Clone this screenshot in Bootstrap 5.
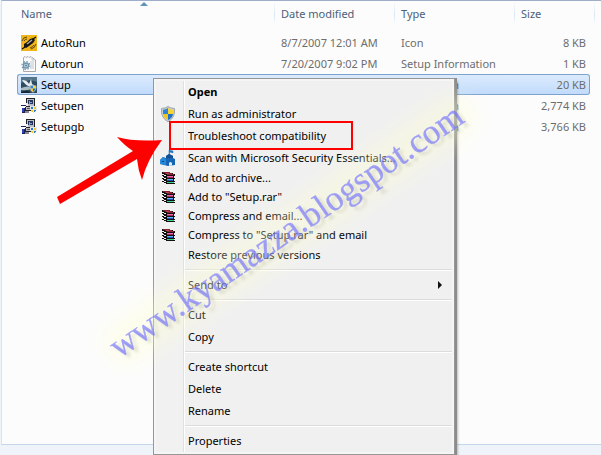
<!DOCTYPE html>
<html lang="en">
<head>
<meta charset="utf-8">
<meta name="viewport" content="width=device-width, initial-scale=1">
<title>Setup files</title>
<link href="https://cdn.jsdelivr.net/npm/bootstrap@5.3.0/dist/css/bootstrap.min.css" rel="stylesheet">
<style>
  body { font: 11px/16px "Noto Sans", "Open Sans", sans-serif; background: #eff3fa; color: #000; }
  .file-pane { background: #fcfcfc; border-top: 1px solid #9fadc8; border-bottom: 1px solid #c5d5ea; border-left: 1px solid #d5e3f1; margin-left: 1px;
    background-image: linear-gradient(#fcfcfc, #d8e7f6 60%, #fcfcfc); background-size: 1px 24px; background-position: right 6px top; background-repeat: no-repeat; }
  .file-table { margin: 0 11px 0 15px; border-collapse: separate; border-spacing: 0; table-layout: fixed; width: calc(100% - 26px); }
  .file-table th { position: relative; height: 31px; padding: 5px 7px 0; vertical-align: top; font-weight: 400; color: #4c607a; }
  .file-table th + th { background: linear-gradient(#fcfcfc, #d8e7f6 60%, #fcfcfc) left top / 1px 24px no-repeat; }
  .file-table th:first-child, .file-table td:first-child { padding-left: 4px; }
  .file-table td { height: 21px; padding: 0 4px 0 7px; color: #6d6d6d; white-space: nowrap; overflow: hidden; border: solid transparent; border-width: 1px 0; }
  .file-table td:first-child { color: #000; padding-left: 3px; border-left-width: 1px; }
  .file-table td:last-child { padding-right: 3px; border-right-width: 1px; }
  .file-table .picked td { border-color: #7da2ce; background: linear-gradient(#dcebfd, #c1dbfc); }
  .file-table .picked td:first-child { border-radius: 3px 0 0 3px; }
  .file-table .picked td:last-child { border-radius: 0 3px 3px 0; }
  .date-col, .type-col { width: 120px; }
  .size-col { width: 76px; }
  .sort-mark { position: absolute; top: 1px; left: 48%; }
  .bottom-strip { height: 10px; }
  .icon16 { width: 16px; height: 16px; flex: none; }
  .shell-menu { position: absolute; left: 153px; top: 78px; width: 302px; padding: 2px; border: 1px solid #979797; box-shadow: 1px 1px 0 1px #8c8c8c, 3px 3px 2px rgba(0,0,0,.25);
    background: linear-gradient(90deg, #f1f1f1 27px, #dfe0e0 27px, #dfe0e0 28px, #fff 28px, #fff 29px, #f0f0f0 29px) 2px 2px / calc(100% - 4px) calc(100% - 4px) no-repeat #f5f5f5; }
  .shell-item { display: flex; align-items: center; width: 100%; height: 22px; border: 0; background: none; padding: 0 10px 0 4px; color: #000; text-align: left; }
  .shell-item .slot { width: 28px; height: 16px; flex: none; display: flex; }
  .shell-item.tight { height: 19px; }
  .shell-item.snug { height: 21px; }
  .shell-line { margin: 3px 0 3px 29px; height: 2px; border: 0; border-top: 1px solid #dcdcdc; background: #fff; opacity: 1; }
  .notes { position: absolute; left: 0; top: 0; pointer-events: none; }
  .stamp { font: 35px "Liberation Serif", serif; }
</style>
<script src="https://cdn.jsdelivr.net/npm/bootstrap@5.3.0/dist/js/bootstrap.bundle.min.js"></script>
</head>
<body>
<svg class="d-none" aria-hidden="true">
  <symbol id="shield" viewBox="0 0 16 16">
    <path d="M8 .5Q10 2.2 14.5 2.5Q15.6 11.5 8 15.8Q.4 11.5 1.5 2.5Q6 2.2 8 .5Z" fill="#c9d0d4" stroke="#8d989f" stroke-width=".8"/>
    <path d="M8 2Q6 3.5 3 3.7V8H8Z" fill="#2d83d7"/><path d="M8 2Q10 3.5 13 3.7V8H8Z" fill="#f7d432"/>
    <path d="M3 8H8V14.3Q3.6 12 3 8Z" fill="#f4c51c"/><path d="M13 8H8V14.3Q12.4 12 13 8Z" fill="#2170c7"/>
  </symbol>
  <symbol id="books" viewBox="0 0 16 16" shape-rendering="crispEdges">
    <path d="M2 2H10V3H13V4H15V6H14V8H15V9H14V11H15V12H14V13H15V14H6V13H4V12H2V10H3V9H2V7H3V6H2Z" fill="#141010"/>
    <path d="M3 2H10V3H12V4H14V5H7V4H5V3H3Z" fill="#8a1f2e"/><path d="M5 3H9V4H6Z" fill="#b34656"/>
    <path d="M7 6H13V7H7Z" fill="#f268b4"/><path d="M7 7H13V8H7Z" fill="#a12a5d"/>
    <path d="M7 9H13V10H7Z" fill="#5cb8ff"/><path d="M7 10H13V11H7Z" fill="#1d50b8"/>
    <path d="M7 12H14V13H7Z" fill="#3ad68a"/>
    <path d="M2 4H4V5H6V6H4V5H2ZM2 7H4V8H6V9H4V8H2ZM2 10H4V11H6V12H4V11H2Z" fill="#f2f2f2"/>
  </symbol>
  <symbol id="installer" viewBox="0 0 16 16" shape-rendering="crispEdges">
    <path d="M5 0H14V8H15V13H4V9H5Z" fill="#222"/><path d="M6 1H13V8H6Z" fill="#b8bdc7"/><path d="M7 2H12V6H7Z" fill="#26345c"/>
    <path d="M8 3H9V4H11V5H9V6H8Z" fill="#75a8df"/><path d="M5 9H14V12H5Z" fill="#bbb"/><path d="M6 10H10V11H6Z" fill="#555"/>
    <path d="M0 7H5V8H4V15H1V8H0Z" fill="#202060"/><path d="M1 8H4V10H1Z" fill="#fff"/><path d="M1 10H3V14H1Z" fill="#2943bd"/>
    <path d="M5 5H7V8H5Z" fill="#eee"/><path d="M4 13H8V15H4Z" fill="#888"/>
    <path d="M9 8H16V12H15V14H13V15H12V14H10V12H9Z" fill="#e2e6ea"/><path d="M10 9H12V11H10ZM13 12H15V13H14V14H13Z" fill="#257bd2"/><path d="M13 9H15V11H13ZM10 12H12V14H11V13H10Z" fill="#f5c927"/>
  </symbol>
</svg>

<div class="position-relative overflow-hidden min-vh-100 d-flex flex-column">
  <main class="file-pane flex-grow-1">
    <table class="file-table">
      <colgroup><col><col class="date-col"><col class="type-col"><col class="size-col"></colgroup>
      <thead>
        <tr>
          <th scope="col">Name
            <svg class="sort-mark" width="8" height="4" viewBox="0 0 8 4" aria-hidden="true"><path d="M4 0L8 4H0Z" fill="#5f93b8"/></svg>
          </th>
          <th scope="col">Date modified</th><th scope="col">Type</th><th scope="col">Size</th>
        </tr>
      </thead>
      <tbody>
        <tr>
          <td><div class="d-flex align-items-center gap-1">
            <svg class="icon16" viewBox="0 0 16 16" aria-hidden="true"><rect width="16" height="16" fill="#efb51b"/><path d="M3 12L3 9L6 7L9 4L12 3L14 5L12 8L8 11L5 13Z" fill="#171717"/><path d="M6 9L11 5" stroke="#aaa" stroke-width="1.4"/><path d="M1 6Q2 2 6 2M3 6Q4 4 6 4M15 9Q14 13 10 14M13 10Q12 12 9 13" fill="none" stroke="#60470d"/><path d="M1 14L4 12M12 4L15 2" stroke="#171717" stroke-width="1.4"/></svg>
            <span>AutoRun</span></div></td>
          <td>8/7/2007 12:01 AM</td><td>Icon</td><td class="text-end">8 KB</td>
        </tr>
        <tr>
          <td><div class="d-flex align-items-center gap-1">
            <svg class="icon16" viewBox="0 0 16 16" aria-hidden="true"><path d="M2.5 1.5L4 .5L5 1.5L7 .5L8 1.5L10 .5L11 1.5L14.5 4V15.5H2.5Z" fill="#fafafa" stroke="#aaa"/><path d="M11 1V4H14M9 6H13M10 8H13M10 10H13M9 12H13" fill="none" stroke="#c2c8cd"/><circle cx="5" cy="9.500" r="2.500" fill="#d5e3ed" stroke="#6f94ad" stroke-width="1.400"/><circle cx="5" cy="9.500" r="4" fill="none" stroke="#6f94ad" stroke-width="1.200" stroke-dasharray="1.500 1.640"/><circle cx="5" cy="9.500" r="1" fill="#527c99"/></svg>
            <span>Autorun</span></div></td>
          <td>7/20/2007 9:02 PM</td><td>Setup Information</td><td class="text-end">1 KB</td>
        </tr>
        <tr class="picked">
          <td><div class="d-flex align-items-center gap-1">
            <svg class="icon16" viewBox="0 0 16 16" aria-hidden="true"><rect width="16" height="16" fill="#2e4a5e"/><path d="M0 0H16V5L9 3L0 6Z" fill="#54758a"/><path d="M1 3Q6 3 8 7L10 2L11 7L14 9L9 10Q4 8 1 3Z" fill="#e6edf0"/><path d="M0 11Q7 8 12 11Q7 14 0 13Z" fill="#a9bbc3"/><path d="M0 15Q6 13 9 15V16H0Z" fill="#16252f"/><use href="#shield" x="8" y="7" width="8" height="9"/></svg>
            <span>Setup</span></div></td>
          <td></td><td>Application</td><td class="text-end">20 KB</td>
        </tr>
        <tr>
          <td><div class="d-flex align-items-center gap-1"><svg class="icon16" aria-hidden="true"><use href="#installer"/></svg><span>Setupen</span></div></td>
          <td></td><td>Application</td><td class="text-end">2,774 KB</td>
        </tr>
        <tr>
          <td><div class="d-flex align-items-center gap-1"><svg class="icon16" aria-hidden="true"><use href="#installer"/></svg><span>Setupgb</span></div></td>
          <td></td><td>Application</td><td class="text-end">3,766 KB</td>
        </tr>
      </tbody>
    </table>
  </main>
  <div class="bottom-strip"></div>

  <div class="shell-menu" role="menu" aria-label="Setup">
    <button class="shell-item fw-bold" role="menuitem"><span class="slot"></span>Open</button>
    <button class="shell-item" role="menuitem"><span class="slot"><svg class="icon16" aria-hidden="true"><use href="#shield"/></svg></span>Run as administrator</button>
    <button class="shell-item" role="menuitem"><span class="slot"></span>Troubleshoot compatibility</button>
    <button class="shell-item snug" role="menuitem"><span class="slot"><svg class="icon16" viewBox="0 0 16 16" aria-hidden="true"><path d="M0 10L3 7L6 8V6L9 4L13 6V8L15 9V15L8 16L0 14Z" fill="#1766b5"/><path d="M0 10L3 7L6 9V15L0 14Z" fill="#2689db"/><path d="M6 6L9 4L13 6V8H6Z" fill="#164e91"/><path d="M9 4V0L13 1V3L9.500 2V4Z" fill="#2375c0" stroke="#2375c0" stroke-width=".5"/><path d="M9 16V13Q10 11 12 13V15.500Z" fill="#d8ecfa"/><path d="M2 11H4V12H2Z" fill="#0c437f"/></svg></span>Scan with Microsoft Security Essentials...</button>
    <button class="shell-item tight" role="menuitem"><span class="slot"><svg class="icon16" aria-hidden="true"><use href="#books"/></svg></span>Add to archive...</button>
    <button class="shell-item tight" role="menuitem"><span class="slot"><svg class="icon16" aria-hidden="true"><use href="#books"/></svg></span>Add to "Setup.rar"</button>
    <button class="shell-item tight" role="menuitem"><span class="slot"><svg class="icon16" aria-hidden="true"><use href="#books"/></svg></span>Compress and email...</button>
    <button class="shell-item tight" role="menuitem"><span class="slot"><svg class="icon16" aria-hidden="true"><use href="#books"/></svg></span>Compress to "Setup.rar" and email</button>
    <button class="shell-item" role="menuitem"><span class="slot"></span>Restore previous versions</button>
    <hr class="shell-line">
    <button class="shell-item" role="menuitem" aria-haspopup="true"><span class="slot"></span>Send to
      <svg class="ms-auto" width="4" height="8" viewBox="0 0 4 8" aria-hidden="true"><path d="M0 0L4 4L0 8Z" fill="#111"/></svg></button>
    <hr class="shell-line">
    <button class="shell-item" role="menuitem"><span class="slot"></span>Cut</button>
    <button class="shell-item" role="menuitem"><span class="slot"></span>Copy</button>
    <hr class="shell-line">
    <button class="shell-item" role="menuitem"><span class="slot"></span>Create shortcut</button>
    <button class="shell-item" role="menuitem"><span class="slot"></span>Delete</button>
    <button class="shell-item" role="menuitem"><span class="slot"></span>Rename</button>
    <hr class="shell-line">
    <button class="shell-item" role="menuitem"><span class="slot"></span>Properties</button>
  </div>

  <!-- Pointer, highlight frame and site stamp drawn over the window -->
  <svg class="notes" width="601" height="455" viewBox="0 0 601 455">
    <defs>
      <filter id="glow" x="-20%" y="-150%" width="140%" height="400%"><feGaussianBlur stdDeviation="9"/></filter>
      <filter id="soft" x="-5%" y="-20%" width="110%" height="140%"><feGaussianBlur stdDeviation="1.8"/></filter>
    </defs>
    <g transform="translate(119 359) rotate(-34.4)">
      <rect x="-6" y="-32" width="440" height="44" rx="20" fill="#ffffd2" opacity=".36" filter="url(#glow)"/>
      <text class="stamp" x="2" y="5" fill="#66664c" opacity=".18" filter="url(#soft)" aria-hidden="true">www.kyamazza.blogspot.com</text>
      <text class="stamp" fill="#7272ff" stroke="#7272ff" stroke-width=".3" opacity=".66">www.kyamazza.blogspot.com</text>
    </g>
    <rect x="170" y="122" width="182" height="27" fill="none" stroke="#f00" stroke-width="2"/>
    <path d="M162 140Q134 142 117 137Q125 146 133 151L57 197L60 204L137 159Q138 170 142 180Q147 160 162 140Z" fill="#f00"/>
  </svg>
</div>
</body>
</html>
